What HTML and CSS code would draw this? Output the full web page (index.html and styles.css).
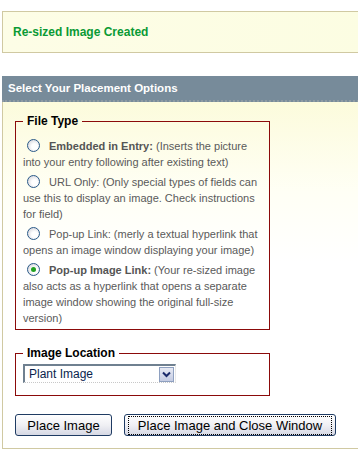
FILE: index.html
```html
<!DOCTYPE html>
<html>
<head>
<meta charset="utf-8">
<link rel="stylesheet" href="styles.css">
</head>
<body>
<div class="page">
  <div class="notice">Re-sized Image Created</div>
  <div class="header">Select Your Placement Options</div>
  <div class="panel">
    <fieldset class="group">
      <legend>File Type</legend>
      <p class="opt"><span class="radio"></span><b>Embedded in Entry:</b> (Inserts the picture into your entry following after existing text)</p>
      <p class="opt"><span class="radio"></span>URL Only: (Only special types of fields can use this to display an image. Check instructions for field)</p>
      <p class="opt"><span class="radio"></span>Pop-up Link: (merly a textual hyperlink that opens an image window displaying your image)</p>
      <p class="opt"><span class="radio checked"></span><b>Pop-up Image Link:</b> (Your re-sized image also acts as a hyperlink that opens a separate image window showing the original full-size version)</p>
    </fieldset>
    <fieldset class="group loc">
      <legend>Image Location</legend>
      <div class="select"><span class="sel-text">Plant Image</span><span class="sel-btn"><svg width="9" height="7" viewBox="0 0 9 7"><path d="M1 1.5 L4.5 5 L8 1.5" fill="none" stroke="#1a2a6a" stroke-width="2"/></svg></span></div>
    </fieldset>
    <div class="buttons">
      <button class="btn">Place Image</button>
      <button class="btn focus"><span class="focus-ring">Place Image and Close Window</span></button>
    </div>
  </div>
</div>
</body>
</html>
```
FILE: styles.css
```css
html, body { margin: 0; padding: 0; background: #fff; overflow: hidden; }
body { font-family: "Liberation Sans", Arial, sans-serif; font-size: 11px; }
.page { margin: 11px 0 0 2px; width: 380px; }
.notice {
  height: 40px;
  border: 1px solid #d0c9a2;
  background: linear-gradient(to right, #fdfde6, #fcfde2);
  color: #0a9a35;
  font-weight: bold;
  font-size: 12px;
  line-height: 41px;
  padding-left: 10px;
}
.header {
  margin-top: 23px;
  height: 24px;
  background: #778b9a;
  color: #fff;
  font-weight: bold;
  font-size: 11.5px;
  line-height: 25px;
  padding-left: 6px;
  border-bottom: 2px dotted #8e9aa3;
}
.panel {
  border-left: 1px solid #d0c9a2;
  border-bottom: 1px solid #d0c9a2;
  background: linear-gradient(to bottom, #fcfbdc 0px, #fffff5 90px, #ffffff 160px);
  padding: 12px 0 12px 12px;
}
.group {
  width: 239px;
  margin: 0;
  border: 1px solid #8b0a0a;
  padding: 10px 7px 3px 7px;
}
legend {
  color: #000;
  font-weight: bold;
  font-size: 12px;
  padding: 0 4px;
  margin-left: 0;
}
.opt {
  margin: 0 0 4px 0;
  color: #5a5a5a;
  line-height: 16px;
}
.opt:last-child { margin-bottom: 0; }
.opt b { color: #555; }
.radio {
  display: inline-block;
  width: 11px;
  height: 11px;
  border: 1px solid #2a5a88;
  border-radius: 50%;
  background: radial-gradient(circle at 60% 60%, #ffffff 30%, #d8d8de 80%);
  vertical-align: -2px;
  margin: 0 9px 0 4px;
  position: relative;
}
.radio.checked::after {
  content: "";
  position: absolute;
  left: 3px; top: 3px;
  width: 5px; height: 5px;
  border-radius: 50%;
  background: #21a121;
}
.loc { margin-top: 16px; padding: 4px 7px 12px 7px; }
.select {
  width: 150px;
  height: 16px;
  border-top: 2px solid #6f8090;
  border-left: 2px solid #6f8090;
  border-right: 1px solid #e8e8e8;
  border-bottom: 1px dotted #c8c8c8;
  background: #fff;
  display: flex;
  align-items: center;
  justify-content: space-between;
  color: #0a1f4d;
  font-size: 12px;
}
.sel-text { padding-left: 4px; }
.sel-btn {
  width: 13px;
  height: 13px;
  margin-right: 1px;
  border: 1px solid #8ea0c0;
  background: linear-gradient(#e7eaf4, #c4cbe2);
  display: flex;
  align-items: center;
  justify-content: center;
}
.buttons { display: flex; gap: 12px; margin-top: 18px; }
.btn {
  height: 22px;
  border: 1px solid #1f3b63;
  border-radius: 3px;
  background: linear-gradient(#ffffff 0%, #f0f0f4 50%, #d6d8e4 100%);
  font-family: "Liberation Sans", Arial, sans-serif;
  font-size: 13px;
  color: #000;
  padding: 0 10px;
}
.btn:first-child { width: 97px; }
.btn.focus { width: 212px; padding: 0 3px; }
.focus-ring { border: 1px dotted #000; padding: 1px 0; display: block; }
```
